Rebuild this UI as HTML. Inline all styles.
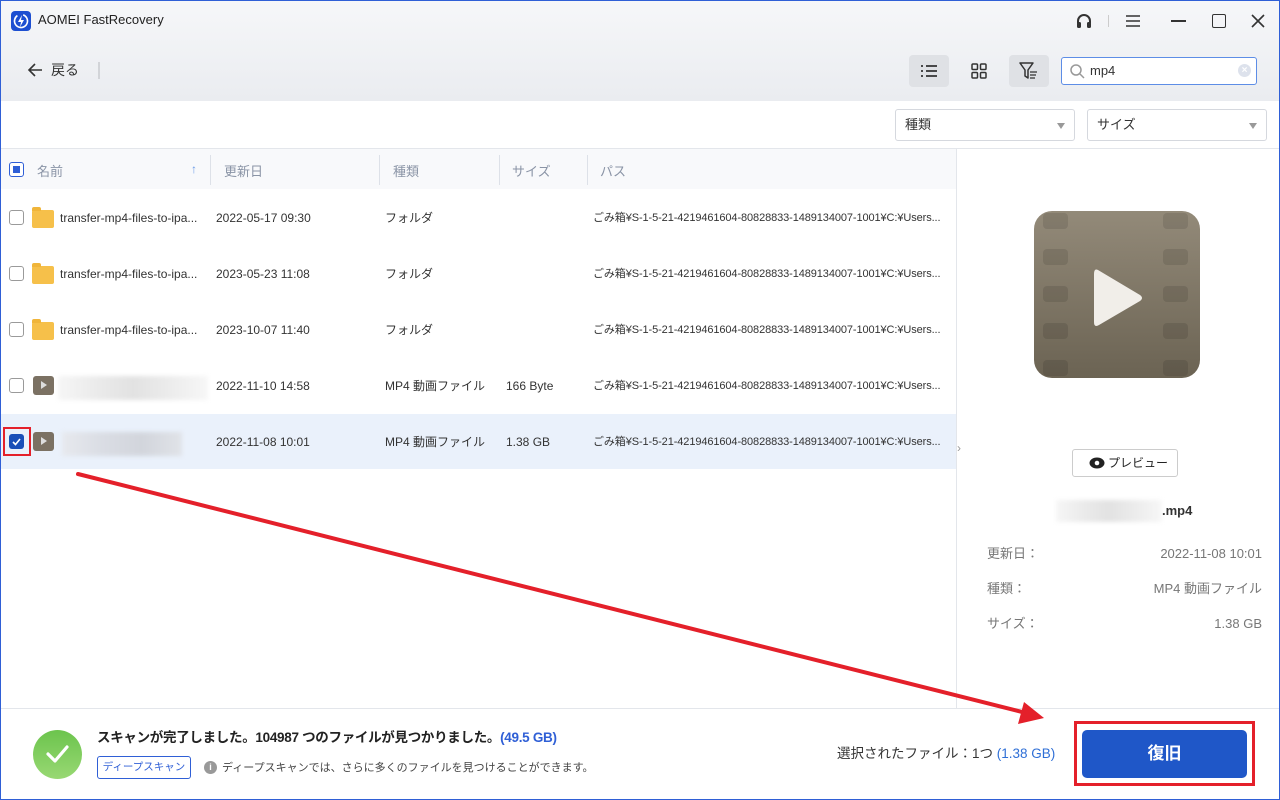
<!DOCTYPE html>
<html><head><meta charset="utf-8"><style>
*{margin:0;padding:0;box-sizing:border-box}
body{width:1280px;height:800px;overflow:hidden;font-family:"Liberation Sans","Noto Sans CJK JP",sans-serif;background:#fff;position:relative;color:#333}
.a{position:absolute}
.top{left:0;top:0;width:1280px;height:101px;background:linear-gradient(#f6f7f9,#eaecf0)}
.frame{left:0;top:0;width:1280px;height:800px;border:1px solid #2f5fd6;pointer-events:none;z-index:50}
.t{font-size:12px;color:#333;white-space:nowrap;line-height:16px}
.p{font-size:11px;letter-spacing:-0.1px}
.cb{width:15px;height:15px;border:1.5px solid #9a9a9a;border-radius:3px;background:#fff}
.hd{font-size:13px;color:#8a94a6}
.sep{width:1px;height:30px;background:#dde1e8;top:155px}
.row{left:1px;width:955px;height:56px}
.folder{width:22px;height:18px;background:#f6c04a;border-radius:2px}
.folder:before{content:"";position:absolute;left:0;top:-3px;width:9px;height:4px;background:#f0b53a;border-radius:2px 2px 0 0}
.vid{width:21px;height:19px;background:#7b7163;border-radius:3px}
.vid:after{content:"";position:absolute;left:8px;top:5px;border-left:6px solid #ddd;border-top:4.5px solid transparent;border-bottom:4.5px solid transparent}
.blur{background:linear-gradient(90deg,#f6f6f6,#ebebeb,#e2e2e2,#ececec,#f7f7f7);filter:blur(2px)}
.dd{height:32px;border:1px solid #d5d8de;border-radius:3px;background:#fff;font-size:13px;padding:6px 9px;color:#333;line-height:18px}
.dd:after{content:"";position:absolute;right:9px;top:13px;border-top:6px solid #999;border-left:4.5px solid transparent;border-right:4.5px solid transparent}
.strip{width:25px;height:16px;background:rgba(0,0,0,.1);border-radius:4px}
.dl{font-size:13px;color:#777}
</style></head><body>
<div class="a top"></div>
<div class="a" style="left:11px;top:11px;width:20px;height:20px;background:#1d4fd1;border-radius:4px"></div>
<svg class="a" style="left:11px;top:11px" width="20" height="20" viewBox="0 0 20 20"><circle cx="10" cy="10" r="6.5" fill="none" stroke="#fff" stroke-width="1.6" stroke-dasharray="30 6" transform="rotate(-30 10 10)"/><path d="M11 4 L7 11 H10 L9 16 L13 9 H10 Z" fill="#fff"/></svg>
<div class="a t" style="left:38px;top:12px;font-size:13px;color:#222">AOMEI FastRecovery</div>
<svg class="a" style="left:1074px;top:11px" width="20" height="20" viewBox="0 0 20 20"><path d="M4 12 V10 a6 6 0 0 1 12 0 V12" fill="none" stroke="#333" stroke-width="2"/><rect x="3" y="11" width="4" height="6" rx="1.5" fill="#333"/><rect x="13" y="11" width="4" height="6" rx="1.5" fill="#333"/></svg>
<div class="a" style="left:1108px;top:15px;width:1px;height:12px;background:#ccc"></div>
<svg class="a" style="left:1125px;top:14px" width="16" height="14"><path d="M1 2H15M1 7H15M1 12H15" stroke="#333" stroke-width="1.6"/></svg>
<div class="a" style="left:1171px;top:20px;width:15px;height:1.6px;background:#333"></div>
<div class="a" style="left:1212px;top:14px;width:14px;height:14px;border:1.7px solid #333;border-radius:2px"></div>
<svg class="a" style="left:1251px;top:14px" width="14" height="14"><path d="M1 1L13 13M13 1L1 13" stroke="#333" stroke-width="1.6"/></svg>
<svg class="a" style="left:27px;top:62px" width="16" height="16"><path d="M15 8H2M8 2L2 8L8 14" fill="none" stroke="#333" stroke-width="1.6"/></svg>
<div class="a t" style="left:51px;top:62px;font-size:14px">戻る</div>
<div class="a" style="left:98px;top:62px;width:2px;height:17px;background:#d2d4d8"></div>
<div class="a" style="left:909px;top:55px;width:40px;height:32px;background:#dfe1e5;border-radius:4px"></div>
<svg class="a" style="left:920px;top:64px" width="18" height="14"><path d="M1 2H3M6 2H17M1 7H3M6 7H17M1 12H3M6 12H17" stroke="#333" stroke-width="1.7"/></svg>
<svg class="a" style="left:971px;top:63px" width="16" height="16"><rect x="1" y="1" width="5.5" height="5.5" rx="1" fill="none" stroke="#333" stroke-width="1.5"/><rect x="9.5" y="1" width="5.5" height="5.5" rx="1" fill="none" stroke="#333" stroke-width="1.5"/><rect x="1" y="9.5" width="5.5" height="5.5" rx="1" fill="none" stroke="#333" stroke-width="1.5"/><rect x="9.5" y="9.5" width="5.5" height="5.5" rx="1" fill="none" stroke="#333" stroke-width="1.5"/></svg>
<div class="a" style="left:1009px;top:55px;width:40px;height:32px;background:#dfe1e5;border-radius:4px"></div>
<svg class="a" style="left:1019px;top:62px" width="20" height="18"><path d="M1 1H14L9 8V16L6 14V8Z" fill="none" stroke="#333" stroke-width="1.5" stroke-linejoin="round"/><path d="M11 10H18M11 13H17M11 16H16" stroke="#333" stroke-width="1.3"/></svg>
<div class="a" style="left:1061px;top:57px;width:196px;height:28px;background:#fff;border:1.5px solid #5d8de6;border-radius:3px"></div>
<svg class="a" style="left:1069px;top:63px" width="16" height="16"><circle cx="7" cy="7" r="5" fill="none" stroke="#999" stroke-width="1.5"/><path d="M11 11L15 15" stroke="#999" stroke-width="1.5"/></svg>
<div class="a t" style="left:1090px;top:63px;font-size:13px">mp4</div>
<div class="a" style="left:1238px;top:64px;width:13px;height:13px;border-radius:50%;background:#dde2ec;color:#fff;font-size:10px;text-align:center;line-height:13px;font-weight:bold">×</div>
<div class="a dd" style="left:895px;top:109px;width:180px">種類</div>
<div class="a dd" style="left:1087px;top:109px;width:180px">サイズ</div>
<div class="a" style="left:0;top:148px;width:1280px;height:1px;background:#e3e6eb"></div>
<div class="a" style="left:1px;top:149px;width:955px;height:40px;background:#f8f9fb"></div>
<div class="a" style="left:9px;top:162px;width:15px;height:15px;border:1.5px solid #2f5fd6;border-radius:3px;background:#fff"><div style="position:absolute;left:2.5px;top:2.5px;width:7px;height:7px;background:#2f5fd6"></div></div>
<div class="a hd" style="left:37px;top:161px">名前</div>
<div class="a" style="left:191px;top:162px;color:#6c9be8;font-size:12px;font-weight:bold">↑</div>
<div class="a sep" style="left:210px"></div>
<div class="a hd" style="left:224px;top:161px">更新日</div>
<div class="a sep" style="left:379px"></div>
<div class="a hd" style="left:393px;top:161px">種類</div>
<div class="a sep" style="left:499px"></div>
<div class="a hd" style="left:512px;top:161px">サイズ</div>
<div class="a sep" style="left:587px"></div>
<div class="a hd" style="left:600px;top:161px">パス</div>
<div class="a cb" style="left:9px;top:210px"></div><div class="a folder" style="left:32px;top:210px"></div>
<div class="a t" style="left:60px;top:210px">transfer-mp4-files-to-ipa...</div><div class="a t" style="left:216px;top:210px">2022-05-17 09:30</div><div class="a t" style="left:385px;top:210px">フォルダ</div><div class="a t p" style="left:593px;top:210px">ごみ箱¥S-1-5-21-4219461604-80828833-1489134007-1001¥C:¥Users...</div>
<div class="a cb" style="left:9px;top:266px"></div><div class="a folder" style="left:32px;top:266px"></div>
<div class="a t" style="left:60px;top:266px">transfer-mp4-files-to-ipa...</div><div class="a t" style="left:216px;top:266px">2023-05-23 11:08</div><div class="a t" style="left:385px;top:266px">フォルダ</div><div class="a t p" style="left:593px;top:266px">ごみ箱¥S-1-5-21-4219461604-80828833-1489134007-1001¥C:¥Users...</div>
<div class="a cb" style="left:9px;top:322px"></div><div class="a folder" style="left:32px;top:322px"></div>
<div class="a t" style="left:60px;top:322px">transfer-mp4-files-to-ipa...</div><div class="a t" style="left:216px;top:322px">2023-10-07 11:40</div><div class="a t" style="left:385px;top:322px">フォルダ</div><div class="a t p" style="left:593px;top:322px">ごみ箱¥S-1-5-21-4219461604-80828833-1489134007-1001¥C:¥Users...</div>
<div class="a cb" style="left:9px;top:378px"></div><div class="a vid" style="left:33px;top:376px"></div><div class="a blur" style="left:58px;top:376px;width:150px;height:24px"></div>
<div class="a t" style="left:216px;top:378px">2022-11-10 14:58</div><div class="a t" style="left:385px;top:378px">MP4 動画ファイル</div><div class="a t" style="left:506px;top:378px">166 Byte</div><div class="a t p" style="left:593px;top:378px">ごみ箱¥S-1-5-21-4219461604-80828833-1489134007-1001¥C:¥Users...</div>
<div class="a row" style="top:414px;background:#eaf1fb;height:55px"></div>
<div class="a" style="left:9px;top:434px;width:15px;height:15px;background:#1a4fb8;border-radius:3px"></div>
<svg class="a" style="left:11px;top:436px" width="11" height="11"><path d="M2 6L4.5 8.5L9 3" fill="none" stroke="#fff" stroke-width="1.6"/></svg>
<div class="a" style="left:3px;top:427px;width:28px;height:29px;border:2.5px solid #e4202a"></div>
<div class="a vid" style="left:33px;top:432px"></div><div class="a blur" style="left:62px;top:432px;width:120px;height:24px;background:linear-gradient(90deg,#e7e9ee,#dadde4,#d2d5dc,#e0e3e8)"></div>
<div class="a t" style="left:216px;top:434px">2022-11-08 10:01</div><div class="a t" style="left:385px;top:434px">MP4 動画ファイル</div><div class="a t" style="left:506px;top:434px">1.38 GB</div><div class="a t p" style="left:593px;top:434px">ごみ箱¥S-1-5-21-4219461604-80828833-1489134007-1001¥C:¥Users...</div>
<div class="a" style="left:956px;top:149px;width:1px;height:559px;background:#e3e6eb"></div>
<div class="a" style="left:957px;top:441px;color:#999;font-size:12px">›</div>
<div class="a" style="left:1034px;top:211px;width:166px;height:167px;border-radius:18px;background:linear-gradient(#938a79,#6b6353)"></div>
<div class="a strip" style="left:1043px;top:213px"></div><div class="a strip" style="left:1043px;top:249px"></div><div class="a strip" style="left:1043px;top:286px"></div><div class="a strip" style="left:1043px;top:323px"></div><div class="a strip" style="left:1043px;top:360px"></div>
<div class="a strip" style="left:1163px;top:213px"></div><div class="a strip" style="left:1163px;top:249px"></div><div class="a strip" style="left:1163px;top:286px"></div><div class="a strip" style="left:1163px;top:323px"></div><div class="a strip" style="left:1163px;top:360px"></div>
<svg class="a" style="left:1092px;top:266px" width="55" height="64"><path d="M6 4 Q2 2 2 8 V56 Q2 62 7 59 L48 35 Q52 32 48 29 Z" fill="#f1eee9"/></svg>
<div class="a" style="left:1072px;top:449px;width:106px;height:28px;border:1px solid #ccc;border-radius:3px;background:#fff"></div>
<svg class="a" style="left:1089px;top:457px" width="16" height="12"><ellipse cx="8" cy="6" rx="7.5" ry="5.5" fill="#222"/><circle cx="8" cy="6" r="2.3" fill="#fff"/></svg>
<div class="a t" style="left:1108px;top:455px;font-size:12px;color:#222">プレビュー</div>
<div class="a blur" style="left:1056px;top:500px;width:106px;height:22px"></div>
<div class="a t" style="left:1162px;top:503px;font-size:13px;font-weight:bold;color:#333">.mp4</div>
<div class="a t dl" style="left:987px;top:546px">更新日：</div><div class="a t dl" style="right:18px;top:546px">2022-11-08 10:01</div>
<div class="a t dl" style="left:987px;top:581px">種類：</div><div class="a t dl" style="right:18px;top:581px">MP4 動画ファイル</div>
<div class="a t dl" style="left:987px;top:616px">サイズ：</div><div class="a t dl" style="right:18px;top:616px">1.38 GB</div>
<div class="a" style="left:0;top:708px;width:1280px;height:1px;background:#e3e6eb"></div>
<div class="a" style="left:33px;top:730px;width:49px;height:49px;border-radius:50%;background:linear-gradient(#6cc44d,#98d873)"></div>
<svg class="a" style="left:45px;top:743px" width="25" height="22"><path d="M3 11L10 18L22 4" fill="none" stroke="#fff" stroke-width="3.2" stroke-linecap="round" stroke-linejoin="round"/></svg>
<div class="a t" style="left:97px;top:730px;font-size:13.5px;font-weight:bold;color:#222;letter-spacing:-0.3px">スキャンが完了しました。104987 つのファイルが見つかりました。<span style="color:#2f5fd6">(49.5 GB)</span></div>
<div class="a" style="left:97px;top:756px;width:94px;height:23px;border:1px solid #2f5fd6;border-radius:3px;font-size:10.5px;color:#2f5fd6;text-align:center;line-height:21px">ディープスキャン</div>
<div class="a" style="left:204px;top:761px;width:13px;height:13px;border-radius:50%;background:#999;color:#fff;font-size:9px;text-align:center;line-height:13px;font-weight:bold">i</div>
<div class="a t" style="left:222px;top:760px;color:#444;font-size:11px">ディープスキャンでは、さらに多くのファイルを見つけることができます。</div>
<div class="a t" style="left:837px;top:746px;font-size:13.5px;color:#333">選択されたファイル：1つ <span style="color:#2f6fd6">(1.38 GB)</span></div>
<div class="a" style="left:1082px;top:730px;width:165px;height:48px;background:#1f57c8;border-radius:5px;color:#fff;font-size:17px;font-weight:bold;text-align:center;line-height:48px">復旧</div>
<div class="a" style="left:1074px;top:721px;width:181px;height:65px;border:3px solid #e4202a"></div>
<svg class="a" style="left:0;top:0;z-index:40" width="1280" height="800"><line x1="78" y1="474" x2="1030" y2="714" stroke="#e4202a" stroke-width="4" stroke-linecap="round"/><path d="M1044 718 L1018 724 L1024 702 Z" fill="#e4202a"/></svg>
<div class="a frame"></div>
</body></html>
